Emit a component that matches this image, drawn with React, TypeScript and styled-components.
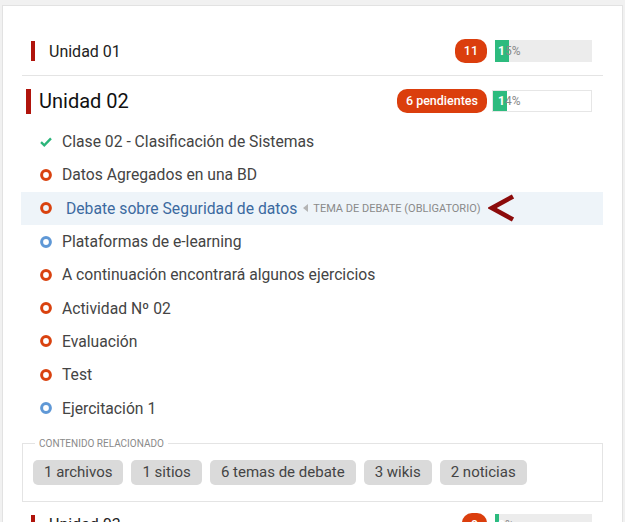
import React from 'react'
import styled, { createGlobalStyle } from 'styled-components'

const GlobalStyle = createGlobalStyle`
  html, body {
    margin: 0;
    padding: 0;
    height: 100%;
    overflow: hidden;
    background: #f1f1f1;
  }
  body {
    font-family: Roboto, "Liberation Sans", sans-serif;
    color: #444;
  }
`

type Status = 'done' | 'pending' | 'open'

interface Item {
   title: string
   status: Status
   active?: boolean
   tag?: string
}

const items: Item[] = [
   { title: 'Clase 02 - Clasificación de Sistemas', status: 'done' },
   { title: 'Datos Agregados en una BD', status: 'pending' },
   { title: 'Debate sobre Seguridad de datos', status: 'pending', active: true, tag: 'Tema de debate (obligatorio)' },
   { title: 'Plataformas de e-learning', status: 'open' },
   { title: 'A continuación encontrará algunos ejercicios', status: 'pending' },
   { title: 'Actividad Nº 02', status: 'pending' },
   { title: 'Evaluación', status: 'pending' },
   { title: 'Test', status: 'pending' },
   { title: 'Ejercitación 1', status: 'open' },
]

const related = ['1 archivos', '1 sitios', '6 temas de debate', '3 wikis', '2 noticias']

const StatusIcon: React.FC<{ status: Status }> = ({ status }) => {
   if (status === 'done') {
      return (
         <svg width="14" height="12" viewBox="0 0 14 12">
            <polyline points="1.2,6.2 5,9.8 12.8,1.8" fill="none" stroke="#2bb57a" strokeWidth="2.8" />
         </svg>
      )
   }
   const color = status === 'pending' ? '#d9420f' : '#5f98d6'
   return (
      <svg width="12" height="12" viewBox="0 0 12 12">
         <circle cx="6" cy="6" r="4.4" fill="none" stroke={color} strokeWidth="3" />
      </svg>
   )
}

// first digit sits on the green fill, the rest on the grey track
const Progress: React.FC<{ value: number; fill: number; outlined?: boolean }> = ({ value, fill, outlined }) => {
   const label = `${value}%`
   return (
      <ProgressBar $outlined={outlined}>
         <ProgressFill style={{ width: fill }} />
         <ProgressLabel>
            <ProgressHead>{label.slice(0, 1)}</ProgressHead>
            {label.slice(1)}
         </ProgressLabel>
      </ProgressBar>
   )
}

const App: React.FC = () => {
   return (
      <>
         <GlobalStyle />
         <Card>
            <UnitHeader $compact>
               <UnitMark $compact />
               <UnitTitle $compact>Unidad 01</UnitTitle>
               <Badge>11</Badge>
               <Progress value={15} fill={14} />
            </UnitHeader>

            <UnitHeader>
               <UnitMark />
               <UnitTitle>Unidad 02</UnitTitle>
               <Badge>6 pendientes</Badge>
               <Progress value={14} fill={14} outlined />
            </UnitHeader>

            <ItemList>
               {items.map((item) => (
                  <ItemRow key={item.title} $active={item.active}>
                     <IconSlot>
                        <StatusIcon status={item.status} />
                     </IconSlot>
                     <ItemTitle $active={item.active}>{item.title}</ItemTitle>
                     {item.tag && (
                        <>
                           <TagArrow />
                           <Tag>{item.tag}</Tag>
                           <Pointer width="27" height="28" viewBox="0 0 27 28">
                              <polyline points="25,2.5 4,14 25,25.5" fill="none" stroke="#8c0b0b" strokeWidth="4.6" />
                           </Pointer>
                        </>
                     )}
                  </ItemRow>
               ))}
            </ItemList>

            <Related>
               <RelatedLegend>Contenido relacionado</RelatedLegend>
               {related.map((label) => (
                  <Chip key={label}>{label}</Chip>
               ))}
            </Related>

            <UnitHeader $compact $last>
               <UnitMark $compact />
               <UnitTitle $compact>Unidad 03</UnitTitle>
               <Badge>9</Badge>
               <Progress value={0} fill={4} />
            </UnitHeader>
         </Card>
      </>
   )
}

export default App


const Card = styled.div`
  margin: 5px 0 0 2px;
  width: 581px;
  padding: 21px 19px 0 19px;
  background: #fff;
  border: 1px solid #e2e2e2;
  border-bottom: none;
`

const UnitHeader = styled.div<{ $compact?: boolean; $last?: boolean }>`
  display: flex;
  align-items: center;
  height: 24px;
  padding: ${(p) => (p.$last ? '11px 11px 12px 9px' : p.$compact ? '12px 11px 12px 9px' : '13px 11px 0 4px')};
  border-bottom: ${(p) => (p.$compact && !p.$last ? '1px solid #e4e4e4' : 'none')};
`

const UnitMark = styled.span<{ $compact?: boolean }>`
  width: ${(p) => (p.$compact ? '4px' : '5px')};
  height: ${(p) => (p.$compact ? '20px' : '25px')};
  background: #b0140c;
  flex-shrink: 0;
`

const UnitTitle = styled.div<{ $compact?: boolean }>`
  flex: 1;
  margin-left: ${(p) => (p.$compact ? '14px' : '8px')};
  font-size: ${(p) => (p.$compact ? '16px' : '20px')};
  color: ${(p) => (p.$compact ? '#222' : '#111')};
`

const Badge = styled.span`
  height: 24px;
  line-height: 24px;
  padding: 0 9px;
  border-radius: 10px;
  background: #db3e0d;
  color: #fff;
  font-size: 12.5px;
  font-weight: 500;
`

const ProgressBar = styled.div<{ $outlined?: boolean }>`
  position: relative;
  box-sizing: border-box;
  width: ${(p) => (p.$outlined ? '100px' : '97px')};
  height: 22px;
  margin-left: ${(p) => (p.$outlined ? '5px' : '8px')};
  padding: ${(p) => (p.$outlined ? '2px' : '0')};
  background: ${(p) => (p.$outlined ? '#fff' : '#ececec')};
  border: ${(p) => (p.$outlined ? '1px solid #e6e6e6' : 'none')};
  display: flex;
  align-items: center;
`

const ProgressFill = styled.div`
  position: absolute;
  left: 0;
  top: 0;
  bottom: 0;
  background: #2dbb7e;
`

const ProgressLabel = styled.span`
  position: relative;
  margin-left: 3px;
  font-size: 12px;
  white-space: nowrap;
  color: #8a8a8a;
`

const ProgressHead = styled.span`
  color: #fff;
  font-weight: 700;
`

const ItemList = styled.div`
  margin-top: 12px;
  display: flex;
  flex-direction: column;
`

const ItemRow = styled.div<{ $active?: boolean }>`
  display: flex;
  align-items: center;
  height: 33.3px;
  padding-left: 19px;
  margin-left: -1px;
  background: ${(p) => (p.$active ? '#eef4f9' : 'transparent')};
`

const IconSlot = styled.span`
  width: 12px;
  display: flex;
  align-items: center;
  justify-content: center;
`

const ItemTitle = styled.span<{ $active?: boolean }>`
  margin-left: ${(p) => (p.$active ? '14px' : '10px')};
  font-size: 15.7px;
  color: ${(p) => (p.$active ? '#3c6aa0' : '#444')};
`

const TagArrow = styled.span`
  margin-left: 6px;
  width: 0;
  height: 0;
  border-top: 4px solid transparent;
  border-bottom: 4px solid transparent;
  border-right: 5px solid #b4b4b4;
`

const Tag = styled.span`
  margin-left: 5px;
  font-size: 11px;
  text-transform: uppercase;
  color: #8a8a8a;
`

const Pointer = styled.svg`
  margin-left: 7px;
`

const Related = styled.fieldset`
  margin: 13px 0 0 0;
  padding: 11px 10px 16px 10px;
  border: 1px solid #e4e4e4;
  display: flex;
  gap: 8px;
`

const RelatedLegend = styled.legend`
  padding: 0 4px;
  margin-left: 2px;
  font-size: 10px;
  text-transform: uppercase;
  color: #8a8a8a;
`

const Chip = styled.span`
  height: 25px;
  line-height: 25px;
  padding: 0 11px;
  border-radius: 5px;
  background: #dadada;
  font-size: 15px;
  color: #444;
`
